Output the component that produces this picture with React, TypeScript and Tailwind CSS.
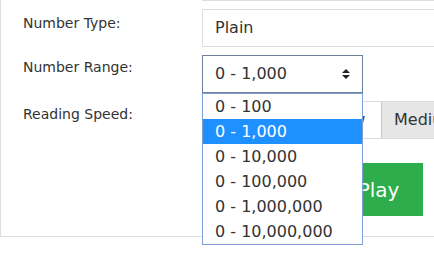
import React from 'react';

const ranges = ['0 - 100', '0 - 1,000', '0 - 10,000', '0 - 100,000', '0 - 1,000,000', '0 - 10,000,000'];

const SortArrows = () => (
  <svg width="8" height="10" viewBox="0 0 8 10" className="shrink-0">
    <path d="M4 0 L8 4 L0 4 Z" fill="#222" />
    <path d="M4 10 L8 6 L0 6 Z" fill="#222" />
  </svg>
);

export default function App() {
  const selected = '0 - 1,000';

  return (
    <div
      className="relative w-[434px] h-[275px] overflow-hidden bg-white text-[#333]"
      style={{ fontFamily: '"DejaVu Sans", Verdana, sans-serif' }}
    >
      <div className="w-[640px] border-l border-b border-[#dddddd] pl-[22px] pb-[20px]">
        {/* bottom edge of the previous field */}
        <div className="ml-[179px] h-px bg-[#dddddd]" />

        <div className="grid grid-cols-[179px_1fr] gap-y-[8px] pt-[8px] text-[16px] leading-[22px]">
          {/* Number Type */}
          <div className="pt-[3px] text-[14px]">Number Type:</div>
          <div className="h-[38px] border border-[#dddddd] flex items-center pl-[12px]">Plain</div>

          {/* Number Range */}
          <div className="pt-[1px] text-[14px]">Number Range:</div>
          <div className="relative w-[161px]">
            <div className="h-[38px] border border-[#6e7f9b] flex items-center justify-between pl-[12px] pr-[12px]">
              <span>{selected}</span>
              <SortArrows />
            </div>
            <div className="absolute left-0 top-[38px] z-10 w-[161px] border border-[#7f9fd6] bg-white">
              {ranges.map((r) => (
                <div
                  key={r}
                  className={
                    r === selected
                      ? 'h-[25px] pl-[12px] flex items-center bg-[#1e90ff] text-white'
                      : 'h-[25px] pl-[12px] flex items-center'
                  }
                >
                  {r}
                </div>
              ))}
            </div>
          </div>

          {/* Reading Speed */}
          <div className="pt-[2px] text-[14px]">Reading Speed:</div>
          <div className="flex h-[38px] border-t border-b border-[#dddddd]">
            <div className="flex items-center justify-center w-[110px] bg-[#e6e6e6] border-l border-r border-[#c6c6c6]">Very Slow</div>
            <div className="flex items-center justify-center w-[70px] bg-white border-r border-[#c6c6c6]">Slow</div>
            <div className="flex items-center px-[12px] bg-[#e6e6e6] border-r border-[#c6c6c6]">Medium</div>
            <div className="flex items-center px-[12px] bg-[#e6e6e6] border-r border-[#c6c6c6]">Fast</div>
          </div>

          {/* Play */}
          <div />
          <div className="pt-[16px]">
            <button className="ml-[132px] h-[53px] w-[89px] bg-[#2dad4b] text-white text-[20px] flex items-center justify-center">
              Play
            </button>
          </div>
        </div>
      </div>
    </div>
  );
}
